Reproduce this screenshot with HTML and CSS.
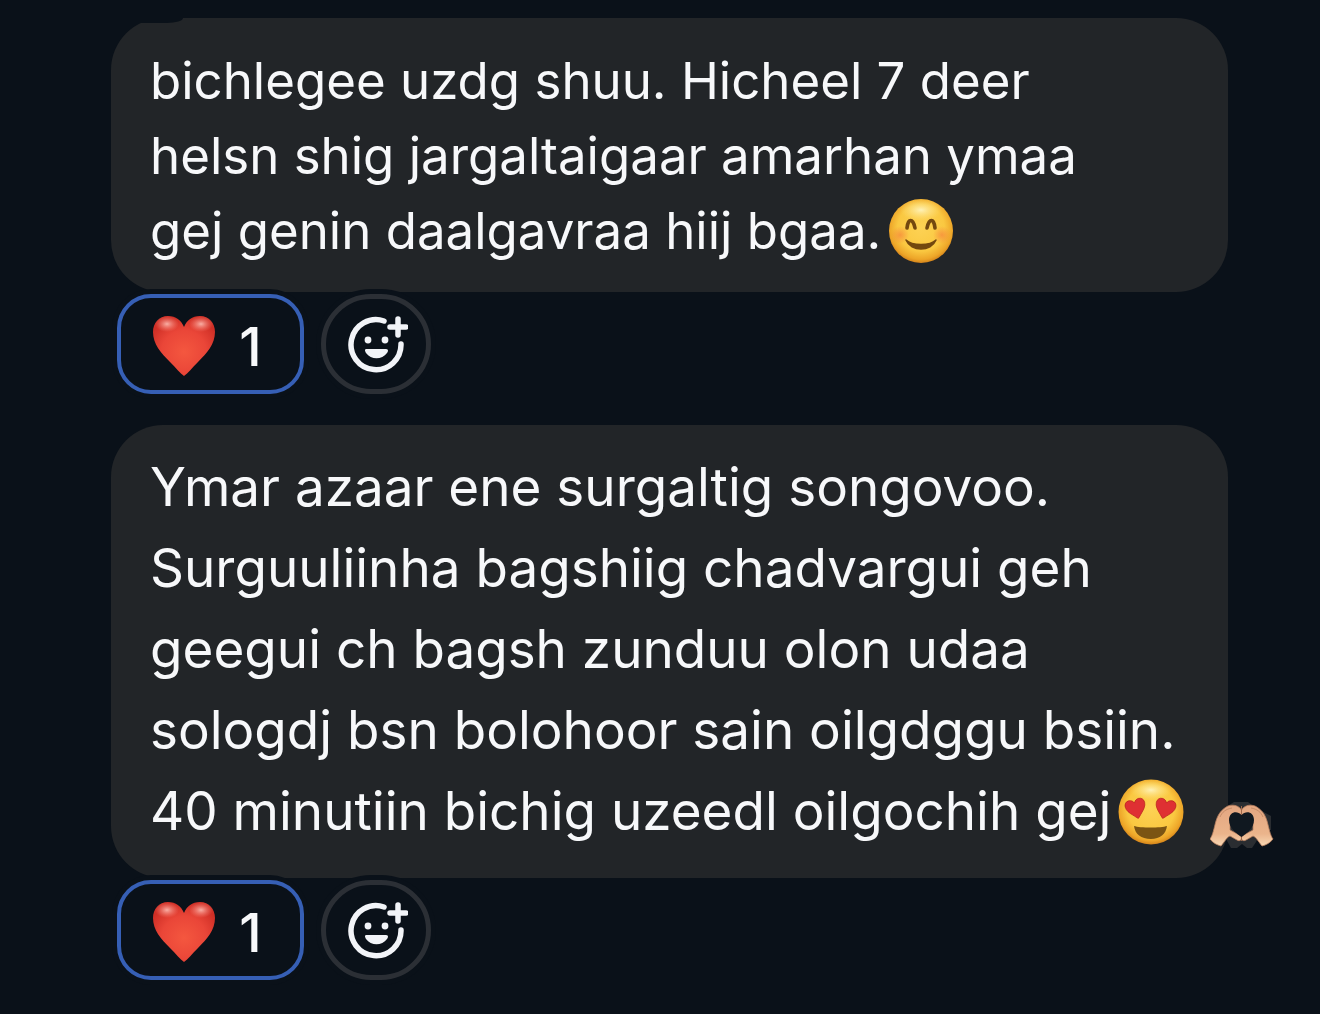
FILE: index.html
```html
<!DOCTYPE html>
<html lang="mn">
<head>
    <meta charset="utf-8">
    <meta name="viewport" content="width=device-width, initial-scale=1">
    <title>Chat</title>
    <link rel="stylesheet" href="styles.css">
</head>
<body>
    <svg class="sprite" aria-hidden="true">
        <defs>
            <radialGradient id="heart-fill" cx="0.5" cy="0.6" r="0.6">
                <stop offset="0" stop-color="#f4573f"/>
                <stop offset="0.6" stop-color="#ea4638"/>
                <stop offset="1" stop-color="#cf2f26"/>
            </radialGradient>
            <radialGradient id="heart-shine">
                <stop offset="0" stop-color="#ffc4ba" stop-opacity="0.85"/>
                <stop offset="1" stop-color="#ff8a7c" stop-opacity="0"/>
            </radialGradient>
            <radialGradient id="face-fill" cx="0.5" cy="0.45" r="0.56">
                <stop offset="0" stop-color="#fdd254"/>
                <stop offset="0.65" stop-color="#fac841"/>
                <stop offset="0.88" stop-color="#eda528"/>
                <stop offset="1" stop-color="#cf7d18"/>
            </radialGradient>
            <radialGradient id="face-shine">
                <stop offset="0" stop-color="#fff6c4" stop-opacity="0.9"/>
                <stop offset="1" stop-color="#ffe583" stop-opacity="0"/>
            </radialGradient>
            <radialGradient id="blush">
                <stop offset="0" stop-color="#f5793a" stop-opacity="0.6"/>
                <stop offset="1" stop-color="#f5793a" stop-opacity="0"/>
            </radialGradient>
            <linearGradient id="skin" x1="0" y1="0" x2="0" y2="1">
                <stop offset="0" stop-color="#e3a681"/>
                <stop offset="0.7" stop-color="#ebb48b"/>
                <stop offset="1" stop-color="#f8d8b4"/>
            </linearGradient>
        </defs>
        <symbol id="heart" viewBox="0 0 62 60">
            <path fill="url(#heart-fill)" d="M31 60C27 57 23 52 17 46C8 37 0 28 0 16C0 7 6 0 15 0C23 0 28 4 31 11C34 4 39 0 47 0C56 0 62 7 62 16C62 28 54 37 45 46C39 52 35 57 31 60Z"/>
            <ellipse cx="14" cy="8" rx="12" ry="8" fill="url(#heart-shine)"/>
            <ellipse cx="48" cy="8" rx="12" ry="8" fill="url(#heart-shine)"/>
        </symbol>
        <symbol id="smile" viewBox="0 0 66 66">
            <circle cx="33" cy="33" r="32" fill="url(#face-fill)"/>
            <ellipse cx="33" cy="12" rx="21" ry="11" fill="url(#face-shine)"/>
            <circle cx="12" cy="37" r="9" fill="url(#blush)"/>
            <circle cx="54" cy="37" r="9" fill="url(#blush)"/>
            <path d="M19 30C20 20 25 20 27 30M39 30C41 20 46 20 47 30" fill="none" stroke="#73480f" stroke-width="3.6" stroke-linecap="round"/>
            <path d="M18 42C24 48 42 48 48 42C43 54 23 54 18 42Z" fill="#73480f" stroke="#73480f" stroke-width="1.5" stroke-linejoin="round"/>
        </symbol>
        <symbol id="heart-eyes" viewBox="0 0 66 66">
            <circle cx="33" cy="33" r="32.5" fill="url(#face-fill)"/>
            <ellipse cx="33" cy="11" rx="21" ry="10" fill="url(#face-shine)"/>
            <svg x="8" y="20" width="20" height="20" viewBox="0 0 62 60" overflow="visible"><path transform="rotate(-14 31 30)" fill="#df3033" stroke="#b5201d" stroke-width="2" d="M31 60C27 57 23 52 17 46C8 37 0 28 0 16C0 7 6 0 15 0C23 0 28 4 31 11C34 4 39 0 47 0C56 0 62 7 62 16C62 28 54 37 45 46C39 52 35 57 31 60Z"/></svg>
            <svg x="37" y="20" width="20" height="20" viewBox="0 0 62 60" overflow="visible"><path transform="rotate(14 31 30)" fill="#df3033" stroke="#b5201d" stroke-width="2" d="M31 60C27 57 23 52 17 46C8 37 0 28 0 16C0 7 6 0 15 0C23 0 28 4 31 11C34 4 39 0 47 0C56 0 62 7 62 16C62 28 54 37 45 46C39 52 35 57 31 60Z"/></svg>
            <path d="M16 47C22 49 43 49 49 47C48 55 42 60 33 60C23 60 17 55 16 47Z" fill="#7b5413"/>
        </symbol>
        <symbol id="hands" viewBox="0 0 64 52">
            <path d="M16 5L24 0H38L46 6L61 14V28H52L46 40L42 46H37L32 42L27 46H21L16 37Z" fill="#2a2d31"/>
            <g id="hand">
                <path fill="url(#skin)" stroke="#b9805f" stroke-width="0.8" d="M0 37C3 33 4 26 6 19C8 12 12 7 18 4C24 2 29 4 31.5 8V14L20 20V28L31 34C33 37 30 40 27 38L20 34C17 35 15 39 11 44C7 43 3 41 0 37Z"/>
                <path d="M10 15C12 10 16 7 22 6" fill="none" stroke="#c58c68" stroke-width="1"/>
            </g>
            <use href="#hand" transform="translate(63 0) scale(-1 1)"/>
            <path d="M31.5 13C27 8 19 10 19 18C19 26 26 31 31.5 35C37 31 44 26 44 18C44 10 36 8 31.5 13Z" fill="#101820"/>
            <path d="M31.5 4V13M31.5 35V39" fill="none" stroke="#9c684b" stroke-width="1"/>
        </symbol>
        <symbol id="add-reaction" viewBox="0 0 60 60">
            <g fill="none" stroke="#f2f4f8" stroke-width="5.5" stroke-linecap="round">
                <path d="M36 5A25 25 0 1 0 53 28"/>
                <path d="M50 3V19M42 11H58"/>
            </g>
            <circle cx="20" cy="24" r="3.4" fill="#f2f4f8"/>
            <circle cx="37" cy="24" r="3.4" fill="#f2f4f8"/>
            <path d="M19 33H38C41 33 40 36 39 37C34 44 23 44 18 37C17 35 16 33 19 33Z" fill="#f2f4f8"/>
        </symbol>
    </svg>

    <main class="chat">
        <article class="message compact">
            <p class="bubble">bichlegee uzdg shuu. Hicheel 7 deer<br>
                helsn shig jargaltaigaar amarhan ymaa<br>
                gej genin daalgavraa hiij bgaa.<svg class="emoji" role="img" aria-label="Smiling face"><use href="#smile"/></svg></p>
            <div class="reactions">
                <button type="button" class="reaction" aria-label="Heart, 1"><svg class="heart"><use href="#heart"/></svg><span>1</span></button>
                <button type="button" class="add" aria-label="Add reaction"><svg class="add-icon"><use href="#add-reaction"/></svg></button>
            </div>
        </article>

        <article class="message">
            <p class="bubble">Ymar azaar ene surgaltig songovoo.<br>
                Surguuliinha bagshiig chadvargui geh<br>
                geegui ch bagsh zunduu olon udaa<br>
                sologdj bsn bolohoor sain oilgdggu bsiin.<br>
                40 minutiin bichig uzeedl oilgochih gej<svg class="emoji" role="img" aria-label="Heart eyes"><use href="#heart-eyes"/></svg>
                <svg class="hands" role="img" aria-label="Heart hands"><use href="#hands"/></svg></p>
            <div class="reactions">
                <button type="button" class="reaction" aria-label="Heart, 1"><svg class="heart"><use href="#heart"/></svg><span>1</span></button>
                <button type="button" class="add" aria-label="Add reaction"><svg class="add-icon"><use href="#add-reaction"/></svg></button>
            </div>
        </article>
    </main>
</body>
</html>
```
FILE: styles.css
```css
* {
    box-sizing: border-box;
}
body {
    margin: 0;
    background-color: #0a1119;
    color: #f7f8fa;
    font-family: Inter, "Liberation Sans", sans-serif;
}
.sprite {
    position: absolute;
    width: 0;
    height: 0;
}
.chat {
    display: flex;
    flex-direction: column;
    gap: 31px;
    padding: 18px 92px 32px 111px;
}
.bubble {
    position: relative;
    margin: 0;
    padding: 22px 0 26px 39px;
    border-radius: 52px;
    background-color: #222528;
    font-size: 53px;
    line-height: 81px;
    white-space: nowrap;
}
.compact .bubble {
    padding: 25px 0 24px 39px;
    font-size: 51px;
    line-height: 75px;
}
/* edge of the reaction row above */
.compact .bubble::before {
    content: "";
    position: absolute;
    top: 0;
    left: 0;
    width: 72px;
    height: 5px;
    border-bottom-right-radius: 16px 5px;
    background-color: #0a1119;
}
.emoji {
    width: 66px;
    height: 66px;
    margin: -12px 0 -8px 7px;
    vertical-align: middle;
    position: relative;
    top: -2px;
}
.hands {
    position: absolute;
    right: -46px;
    bottom: 24px;
    width: 64px;
    height: 52px;
}
.reactions {
    position: relative;
    display: flex;
    gap: 17px;
    margin-top: 2px;
    padding-left: 6px;
}
button {
    display: flex;
    align-items: center;
    justify-content: center;
    height: 100px;
    background-color: #0a1119;
    box-shadow: 0 0 0 5px #0a1119;
    color: inherit;
    font-family: inherit;
    cursor: pointer;
}
.reaction {
    gap: 24px;
    width: 187px;
    padding: 4px 6px 0 0;
    border: 4px solid #365fb5;
    border-radius: 34px;
    font-size: 54px;
    font-weight: 500;
}
.heart {
    width: 62px;
    height: 60px;
}
.add {
    width: 110px;
    padding: 4px 0 0 4px;
    border: 5px solid #2b2f35;
    border-radius: 50px;
}
.add-icon {
    width: 60px;
    height: 60px;
}
```
